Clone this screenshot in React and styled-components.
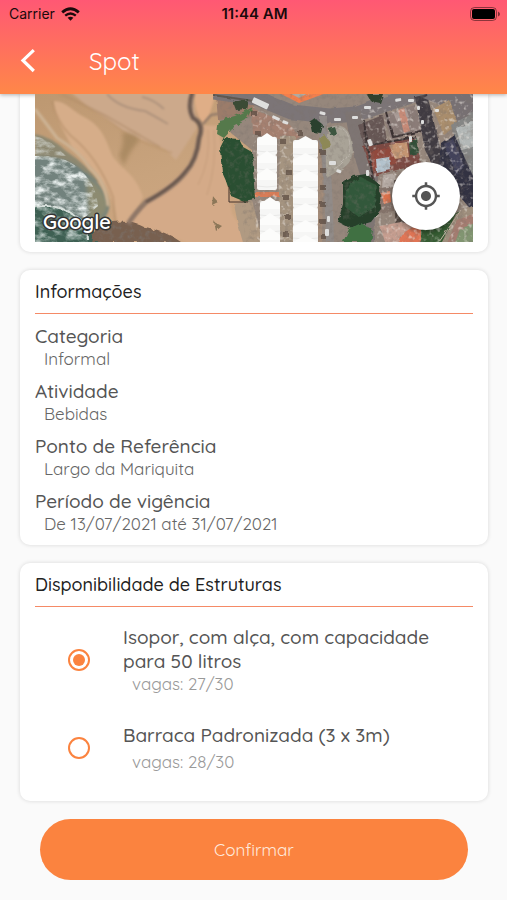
import React, {useState} from 'react';
import styled, {createGlobalStyle} from 'styled-components';
import {MdMyLocation} from 'react-icons/md';

const details = [
    {label: 'Categoria', value: 'Informal'},
    {label: 'Atividade', value: 'Bebidas'},
    {label: 'Ponto de Referência', value: 'Largo da Mariquita'},
    {label: 'Período de vigência', value: 'De 13/07/2021 até 31/07/2021'},
];

const structures = [
    {id: 'isopor', name: 'Isopor, com alça, com capacidade para 50 litros', free: '27/30'},
    {id: 'barraca', name: 'Barraca Padronizada (3 x 3m)', free: '28/30'},
];

// white tents of the fair, one column per x
const tents = [
    {x: 257, w: 20, rows: [137, 155, 172]},
    {x: 260, w: 20, rows: [201, 217, 232]},
    {x: 293, w: 25, rows: [140, 157, 173, 190, 207, 224, 239]},
];

const cars = [
    [254, 97, 17, 6, 25], [320, 111, 6, 3, 15], [334, 118, 7, 3, 0], [352, 116, 6, 3, 0],
    [364, 106, 7, 3, 0], [395, 99, 6, 3, -10], [408, 99, 6, 3, 0], [329, 161, 7, 4, 0],
    [337, 169, 5, 3, 20], [367, 140, 4, 7, -20], [366, 170, 3, 6, 0], [325, 229, 4, 7, 0],
    [327, 216, 3, 6, 0], [273, 115, 8, 3, 25], [283, 120, 6, 3, 20], [417, 106, 3, 4, 0],
    [421, 120, 3, 4, 0], [409, 136, 3, 6, 0], [435, 109, 4, 3, 0],
];

// little dark awnings beside the tents
const shadows = [
    [251, 111], [255, 131], [280, 139], [297, 131], [320, 150], [320, 168], [320, 185],
    [320, 202], [320, 219], [320, 234], [286, 170], [283, 195], [285, 215], [283, 232],
];

function SatelliteMap() {
    return (
        <MapArt viewBox="35 94 438 148" preserveAspectRatio="xMidYMid slice" aria-hidden="true">
            <defs>
                <linearGradient id="sand" x1="0" y1="0" x2="1" y2="1">
                    <stop offset="0" stopColor="#bd9871"/>
                    <stop offset="0.4" stopColor="#c8a37d"/>
                    <stop offset="1" stopColor="#d5ab86"/>
                </linearGradient>
                <filter id="rough" x="-10%" y="-10%" width="120%" height="120%">
                    <feTurbulence type="fractalNoise" baseFrequency="0.16" numOctaves="3" seed="4"/>
                    <feDisplacementMap in="SourceGraphic" scale="5"/>
                </filter>
                <filter id="town" x="0" y="0" width="100%" height="100%">
                    <feTurbulence type="fractalNoise" baseFrequency="0.12" numOctaves="2" seed="6"/>
                    <feDisplacementMap in="SourceGraphic" scale="3"/>
                    <feGaussianBlur stdDeviation="0.5"/>
                </filter>
                <filter id="grain" x="0" y="0" width="100%" height="100%">
                    <feTurbulence type="fractalNoise" baseFrequency="0.2" numOctaves="3" seed="9"/>
                    <feColorMatrix values="0 0 0 0 0.2  0 0 0 0 0.17  0 0 0 0 0.15  2.6 0 0 0 -1.2"/>
                    <feComposite in2="SourceGraphic" operator="in"/>
                </filter>
                <filter id="speckle" x="0" y="0" width="100%" height="100%">
                    <feTurbulence type="fractalNoise" baseFrequency="0.22" numOctaves="2" seed="31"/>
                    <feColorMatrix values="0 0 0 0 0.87  0 0 0 0 0.82  0 0 0 0 0.77  0 4 0 0 -2.2"/>
                    <feComposite in2="SourceGraphic" operator="in"/>
                </filter>
                <filter id="foam" x="0" y="0" width="100%" height="100%">
                    <feTurbulence type="fractalNoise" baseFrequency="0.09 0.15" numOctaves="4" seed="21"/>
                    <feColorMatrix values="0 0 0 0 0.82  0 0 0 0 0.87  0 0 0 0 0.86  2.6 0 0 0 -1.05"/>
                    <feComposite in2="SourceGraphic" operator="in"/>
                    <feGaussianBlur stdDeviation="0.4"/>
                </filter>
                <filter id="soft"><feGaussianBlur stdDeviation="2"/></filter>
                <filter id="edge"><feGaussianBlur stdDeviation="0.8"/></filter>
            </defs>

            <rect x="35" y="94" width="438" height="148" fill="url(#sand)"/>
            {/* beach */}
            <g filter="url(#edge)">
                <path d="M68 90H192L197 128L176 160L165 149L131 135L96 113Z" fill="#cca98b"/>
                <path d="M54 101C66 101 73 112 86 118C104 128 107 144 113 157C124 171 136 175 143 197L130 226H118C114 187 91 166 72 148C66 133 54 119 54 101Z" fill="#d6ad89"/>
                <path d="M62 94L106 116L160 147" stroke="#b18d6b" strokeWidth="2" fill="none" opacity="0.6"/>
                <path d="M58 95Q93 106 126 134Q148 145 172 153" stroke="#b9936c" strokeWidth="2" fill="none" opacity="0.5"/>
                <path d="M107 94Q119 108 145 111Q158 118 168 124M142 97Q153 99 164 109" stroke="#9b8575" strokeWidth="2" fill="none" opacity="0.6"/>
                <path d="M52 101Q57 122 70 135Q98 157 113 197L116 228" stroke="#b08a63" strokeWidth="2" fill="none" opacity="0.5"/>
                <path d="M203 125L218 126L232 214L254 246H196L150 229L129 223L150 199L181 174L200 148Z" fill="#d4aa88"/>
                <path d="M208 130Q211 160 198 185M214 130Q217 165 207 195" stroke="#bd9676" strokeWidth="1" fill="none" opacity="0.7"/>
                <path d="M194 90H217L209 116L203 124Q194 111 194 94Z" fill="#dfae87"/>
            </g>
            <path d="M122 133Q137 132 139 141Q129 151 124 166L119 155Q125 144 122 133Z" fill="#a0825a" opacity="0.7" filter="url(#soft)"/>
            {/* water */}
            <path d="M35 134Q52 137 66 151Q88 166 99 182L83 184L35 160Z" fill="#8d8871" filter="url(#edge)"/>
            <path d="M30 157Q66 154 83 171Q104 183 109 208Q105 224 88 230L30 238Z" fill="#72827d" filter="url(#edge)"/>
            <path d="M86 178Q105 186 108 206Q104 220 90 224Z" fill="#8d8b71" filter="url(#soft)"/>
            <path d="M35 109Q45 122 57 138Q79 151 90 168Q106 182 108 206" stroke="#cdb495" strokeWidth="3" fill="none" filter="url(#edge)"/>
            <path d="M35 206Q55 205 72 214Q91 221 99 242H35Z" fill="#3e6053"/>
            <path d="M35 156Q66 154 82 172Q96 184 98 206L84 218Q60 206 35 206Z" fill="#fff" filter="url(#foam)"/>
            <path d="M35 136Q50 139 66 156L35 154Z" fill="#fff" opacity="0.6" filter="url(#foam)"/>
            <path d="M35 206Q60 206 84 218L88 242H35Z" fill="#fff" opacity="0.7" filter="url(#foam)"/>
            <path d="M35 207Q59 203 75 216Q88 222 88 240" stroke="#d7dfdb" strokeWidth="2" fill="none" filter="url(#rough)"/>
            {/* rocks */}
            <path d="M91 242Q94 222 113 222Q131 220 146 228Q166 231 181 242Z" fill="#78604f" filter="url(#rough)"/>
            <path d="M94 242Q96 225 113 224Q131 222 146 230Q164 233 176 242Z" fill="#000" opacity="0.7" filter="url(#grain)"/>
            {/* creek */}
            <g filter="url(#edge)" fill="none">
                <path d="M193 92Q187 108 193 118Q205 124 199 138Q197 160 185 173Q174 187 146 202Q135 213 128 224" stroke="#8f7767" strokeWidth="5"/>
                <path d="M192 92Q187 108 193 118Q204 124 199 138Q197 160 185 172Q174 186 146 202" stroke="#67564d" strokeWidth="3"/>
                <path d="M203 124L211 115L230 112" stroke="#8c7667" strokeWidth="2"/>
            </g>

            {/* town */}
            <g filter="url(#town)">
                <path d="M216 88H480V248H250L246 228L238 204L250 199L252 150L232 134L219 120Z" fill="#96877c"/>
                <path d="M216 94H253L255 116L218 120Z" fill="#9b7c6b"/>
                <path d="M234 204L252 200L264 246H244L238 225Z" fill="#b09a82"/>
                <path d="M252 108L290 125L300 137L290 141L253 134Z" fill="#a5806f"/>
                {/* streets */}
                <path d="M214 92L257 98L291 112L329 116L357 114L395 101L430 90" stroke="#7b7577" strokeWidth="15" fill="none"/>
                <path d="M353 112Q357 139 369 177L366 242" stroke="#7e7573" strokeWidth="16" fill="none"/>
                <path d="M323 116V132Q328 165 330 242" stroke="#918b88" strokeWidth="8" fill="none"/>
                <path d="M213 95L253 101" stroke="#5b544d" strokeWidth="2"/>
                <path d="M328 128Q348 119 352 144Q356 163 338 171L327 178Q324 151 328 128Z" fill="#a9a397"/>
                <path d="M330 129Q350 122 350 149Q348 161 334 169" stroke="#bbb4ab" strokeWidth="1" fill="none"/>
                <path d="M269 88H340L299 103Z" fill="#f27f4e"/>
                <path d="M280 88H318L299 98Z" fill="#b0aaa1"/>
                {/* paving between the tents */}
                <path d="M280 136L295 136L295 242H278Z" fill="#a59480"/>
                <path d="M318 140Q324 151 322 242H317Z" fill="#a48c79"/>
                <path d="M253 192H280V197H253Z" fill="#d97b56"/>
                {/* rooftops */}
                <path d="M358 125L383 115L387 142L365 147Z" fill="#655453"/>
                <path d="M384 115L415 105L422 132L391 140Z" fill="#8b7b78"/>
                <path d="M393 112L406 108L409 117L397 122Z" fill="#aa9c97"/>
                <path d="M398 110L404 108L410 131L404 133Z" fill="#c78b78"/>
                <path d="M363 147L416 137L421 164L373 176Z" fill="#7b4a43"/>
                <path d="M370 153L391 146L397 163L373 171Z" fill="#91493e"/>
                <path d="M389 145L407 142L409 157L395 159Z" fill="#c49572"/>
                <path d="M409 142L417 138L419 153L410 155Z" fill="#334f38"/>
                <path d="M376 159L389 157L391 170L377 173Z" fill="#b3c2cc"/>
                <path d="M383 175L396 173L394 188L382 188Z" fill="#b5aaa3"/>
                <path d="M375 189L393 186L394 211L377 213Z" fill="#84736a"/>
                <path d="M381 193L390 191L391 202L384 204Z" fill="#db714c"/>
                <path d="M394 180H421L434 242H396Z" fill="#554842"/>
                <path d="M415 97L427 94L440 147L446 171L437 173L425 150Z" fill="#3f3a42"/>
                <path d="M423 98L443 88H480V146L454 138L449 108Z" fill="#777073"/>
                <path d="M433 109L449 100L458 124L444 135Z" fill="#a98d6c"/>
                <path d="M451 125L480 109V190L461 166Z" fill="#858685"/>
                <path d="M456 128L480 119V145L462 150Z" fill="#b3b8b7"/>
                <path d="M441 143L454 134L473 176V212L450 185L439 167Z" fill="#333343"/>
                <path d="M444 144L453 139L464 166L457 175Z" fill="#43435a"/>
                <path d="M380 226L401 222L424 226L411 248H387Z" fill="#c69e90"/>
                <path d="M405 232L413 227L426 232L420 242H399Z" fill="#e07454"/>
                <path d="M421 230L451 216L460 211L440 248H421Z" fill="#345b32"/>
                <path d="M456 214L480 202V248H439Z" fill="#9e8e7c"/>
                <path d="M457 220L480 212V248H445Z" fill="#a47b70"/>
                <path d="M460 229L480 221V248H453Z" fill="#819571"/>
                <path d="M461 210L439 242" stroke="#c6b5a2" strokeWidth="1"/>
                <path d="M364 120L367 147L374 182M386 112L393 137L421 131M370 145L416 137" stroke="#3a3032" strokeWidth="2" fill="none"/>
            </g>
            <path d="M218 94H473V242H246L240 204L252 200L250 150L222 124Z" fill="#000" opacity="0.4" filter="url(#grain)"/>
            <path d="M360 110L473 94V242H376ZM252 106L300 130V242H256Z" fill="#000" opacity="0.5" filter="url(#speckle)"/>

            {/* trees */}
            <g filter="url(#rough)">
                <path d="M219 120L235 116L253 107L246 120L234 127L224 138L217 134Z" fill="#55794c"/>
                <path d="M233 102L248 99L246 109L236 110Z" fill="#3a4b35"/>
                <path d="M220 148L225 138L239 139L243 147L252 152L255 199L243 201L231 196L226 181L222 172Z" fill="#2a4f33"/>
                <path d="M343 183L354 176L366 174L379 184L381 209L371 222L349 228L338 222L343 204Z" fill="#263f2c"/>
                <path d="M346 188L360 177L376 185L375 207L359 217L345 207Z" fill="#33583a"/>
                <path d="M349 229L361 223L373 230L371 242H343Z" fill="#3f6f43"/>
                <path d="M310 123L316 119L323 125L321 133L312 132Z" fill="#29412d"/>
                <path d="M329 129L335 127L337 134L330 135Z" fill="#3c5740"/>
                <path d="M367 94H383L380 103L371 101Z" fill="#33402f"/>
                <path d="M319 138L325 135L332 146L323 150Z" fill="#8d8856"/>
                <path d="M213 196L218 202L212 205ZM214 222L222 226L216 231Z" fill="#8c7759"/>
            </g>
            <path d="M223 142L238 142L252 154V198H232ZM343 180L376 184V212L343 222Z" fill="#000" opacity="0.35" filter="url(#grain)"/>
            <path d="M229 186V202H248" stroke="#42322d" strokeWidth="1" fill="none"/>

            <g filter="url(#town)">
                {shadows.map(([x, y]) => (
                    <rect key={`${x}-${y}`} x={x} y={y} width="6" height="5" fill="#5a4a3e" opacity="0.7"/>
                ))}
            </g>
            {tents.map((col) => col.rows.map((y) => (
                <g key={`${col.x}-${y}`}>
                    <rect x={col.x} y={y} width={col.w} height="18" rx="2" fill="#f6f6f5"/>
                    <path d={`M${col.x} ${y + 3}L${col.x + col.w / 2} ${y - 4}L${col.x + col.w} ${y + 3}V${y + 8}H${col.x}Z`} fill="#fcfcfb"/>
                    <path d={`M${col.x} ${y + 14}L${col.x + col.w / 2} ${y + 15}L${col.x + col.w} ${y + 14}`} stroke="#e9e9e8" strokeWidth="1" fill="none"/>
                </g>
            )))}
            {cars.map(([x, y, w, h, turn]) => (
                <rect key={`${x}-${y}`} x={x} y={y} width={w} height={h} rx="1" fill="#dededd"
                      transform={`rotate(${turn} ${x} ${y})`}/>
            ))}
        </MapArt>
    );
}

export default function App() {
    const [selected, setSelected] = useState('isopor');

    return (
        <>
            <GlobalStyle/>
            <Header>
                <StatusBar>
                    <Carrier>
                        Carrier
                        <svg width="19" height="14" viewBox="0 0 19 14" fill="none" stroke="currentColor">
                            <path d="M1.2 5.4Q9.5 -1.8 17.8 5.4" strokeWidth="2.8"/>
                            <path d="M4.2 8.6Q9.5 4.2 14.8 8.6" strokeWidth="2.4"/>
                            <path d="M6.6 10.8Q9.5 8.6 12.4 10.8L9.5 13.8Z" fill="currentColor" stroke="none"/>
                        </svg>
                    </Carrier>
                    <Clock>11:44 AM</Clock>
                    <Battery>
                        <svg width="30" height="14" viewBox="0 0 30 14">
                            <rect x="0.5" y="0.5" width="26" height="13" rx="4" fill="none" stroke="#000" strokeOpacity="0.45"/>
                            <rect x="2" y="2" width="23" height="10" rx="2" fill="#000"/>
                            <path d="M28 4.5Q30 5.5 30 7T28 9.5Z" fill="#000" opacity="0.5"/>
                        </svg>
                    </Battery>
                </StatusBar>
                <NavBar>
                    <BackButton type="button" aria-label="Voltar">
                        <svg width="16" height="24" viewBox="0 0 16 24" fill="none" stroke="currentColor" strokeWidth="3.2">
                            <path d="M13.8 1.2L3 11.4L13.8 22"/>
                        </svg>
                    </BackButton>
                    <Title>Spot</Title>
                </NavBar>
            </Header>

            <Content>
                <MapCard>
                    <MapBox>
                        <SatelliteMap/>
                        <Attribution>Google</Attribution>
                        <LocateButton type="button" aria-label="Minha localização">
                            <MdMyLocation size={30}/>
                        </LocateButton>
                    </MapBox>
                </MapCard>

                <Card>
                    <CardTitle>Informações</CardTitle>
                    <Details>
                        {details.map((item) => (
                            <div key={item.label}>
                                <Label>{item.label}</Label>
                                <Value>{item.value}</Value>
                            </div>
                        ))}
                    </Details>
                </Card>

                <Card>
                    <CardTitle id="structures">Disponibilidade de Estruturas</CardTitle>
                    <Options role="radiogroup" aria-labelledby="structures">
                        {structures.map((item) => (
                            <Option key={item.id} htmlFor={item.id}>
                                <Radio
                                    id={item.id}
                                    name="structure"
                                    checked={selected === item.id}
                                    onChange={() => setSelected(item.id)}
                                />
                                <OptionText>
                                    <OptionName>{item.name}</OptionName>
                                    <Vacancies>vagas: {item.free}</Vacancies>
                                </OptionText>
                            </Option>
                        ))}
                    </Options>
                </Card>

                <ConfirmButton type="button">Confirmar</ConfirmButton>
            </Content>
        </>
    );
}

const GlobalStyle = createGlobalStyle`
* {
    box-sizing: border-box;
}
body {
    margin: 0;
    background: #fafafa;
    color: #555;
    font-family: Quicksand, Lato, sans-serif;
}
button {
    border: 0;
    padding: 0;
    font-family: inherit;
    cursor: pointer;
}
svg {
    display: block;
}
`

const Header = styled.header`
position: relative;
background: linear-gradient(#ff5874, #ff8748);
box-shadow: 0 1px 4px rgba(0, 0, 0, 0.3);
`

const StatusBar = styled.div`
display: grid;
grid-template-columns: 1fr auto 1fr;
align-items: center;
height: 27px;
padding: 0 7px 0 9px;
color: #1b0a0c;
font-family: Inter, sans-serif;
font-size: 14px;
`

const Carrier = styled.span`
display: flex;
align-items: center;
gap: 6px;
`

const Clock = styled.span`
font-size: 15px;
font-weight: 600;
`

const Battery = styled.span`
justify-self: end;
`

const NavBar = styled.div`
display: flex;
align-items: center;
gap: 53px;
height: 67px;
padding: 0 20px;
`

const BackButton = styled.button`
background: none;
color: #fff;
`

const Title = styled.h1`
margin: 0;
color: #fff;
font-size: 24px;
font-weight: 400;
`

const Content = styled.main`
display: flex;
flex-direction: column;
gap: 18px;
padding: 0 19px 19px 20px;
`

const Card = styled.section`
padding: 10px 15px;
border-radius: 10px;
background: #fff;
box-shadow: 0 0 4px rgba(0, 0, 0, 0.14);
`

const MapCard = styled(Card)`
padding: 0 15px 10px;
border-radius: 0 0 10px 10px;
`

const MapBox = styled.div`
position: relative;
height: 148px;
overflow: hidden;
`

const MapArt = styled.svg`
width: 100%;
height: 100%;
`

const Attribution = styled.span`
position: absolute;
left: 8px;
bottom: 8px;
color: #fff;
font-size: 20px;
font-weight: 600;
line-height: 24px;
-webkit-text-stroke: 3px #333;
paint-order: stroke fill;
`

const LocateButton = styled.button`
position: absolute;
right: 13px;
bottom: 12px;
display: grid;
place-items: center;
width: 68px;
height: 68px;
border-radius: 50%;
background: #fff;
color: #555;
box-shadow: 0 2px 5px rgba(0, 0, 0, 0.4);
`

const CardTitle = styled.h2`
margin: 0;
padding-bottom: 9px;
border-bottom: 1px solid #f58a66;
color: #222;
font-size: 18px;
font-weight: 500;
line-height: 24px;
`

const Details = styled.dl`
display: flex;
flex-direction: column;
gap: 10px;
margin: 0;
padding: 10px 0 1px;
`

const Label = styled.dt`
font-size: 19px;
font-weight: 500;
line-height: 24px;
`

const Value = styled.dd`
margin: 0;
padding-left: 9px;
color: #666;
font-size: 17px;
line-height: 21px;
`

const Options = styled.div`
display: flex;
flex-direction: column;
gap: 29px;
padding: 18px 0 19px;
`

const Option = styled.label`
display: grid;
grid-template-columns: 88px 1fr;
align-items: center;
cursor: pointer;
`

const Radio = styled.input.attrs({type: 'radio'})`
appearance: none;
justify-self: center;
width: 22px;
height: 22px;
margin: 0;
padding: 3px;
border: 2px solid #fb833f;
border-radius: 50%;
&:checked {
    background: #fb833f content-box;
}
`

const OptionText = styled.span`
display: flex;
flex-direction: column;
padding-right: 20px;
`

const OptionName = styled.span`
min-height: 28px;
font-size: 19px;
font-weight: 500;
line-height: 24px;
`

const Vacancies = styled.span`
padding-left: 9px;
color: #999;
font-size: 17px;
line-height: 21px;
`

const ConfirmButton = styled.button`
height: 61px;
margin: 0 20px;
border-radius: 31px;
background: #fb833f;
color: #ffe9dc;
font-size: 17px;
`
